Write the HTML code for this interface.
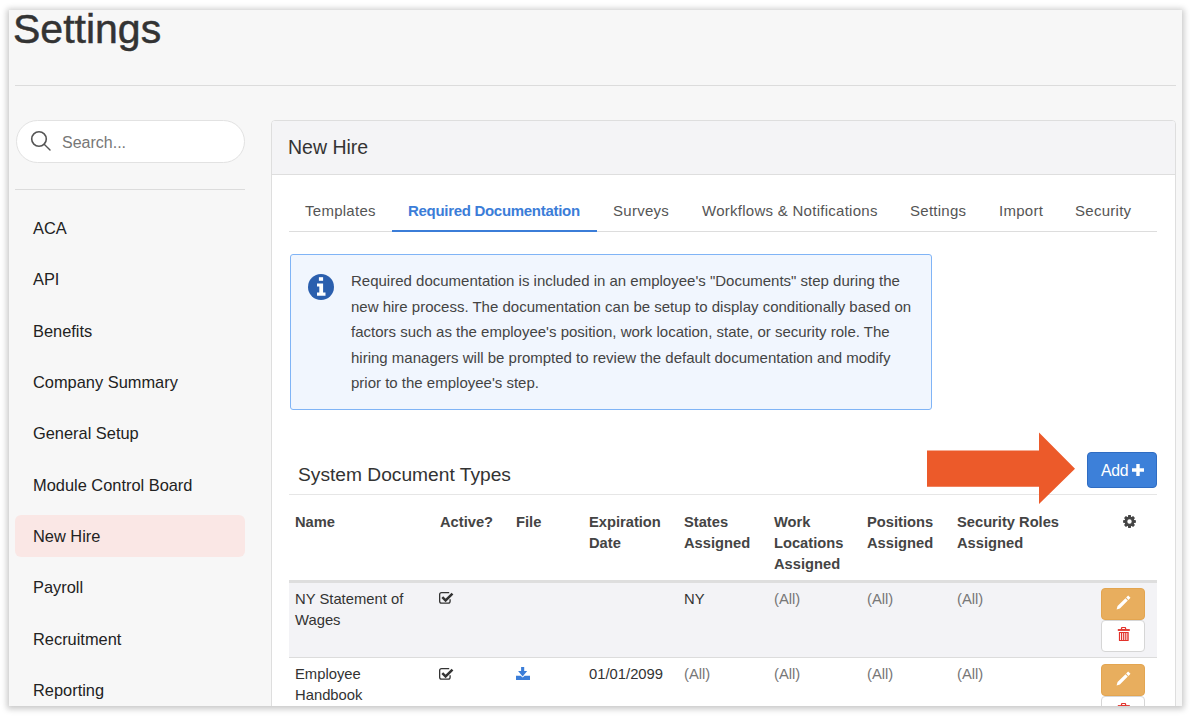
<!DOCTYPE html>
<html><head><meta charset="utf-8">
<style>
*{margin:0;padding:0;box-sizing:border-box}
html,body{width:1190px;height:716px;background:#fff;overflow:hidden;font-family:"Liberation Sans",sans-serif}
.frame{position:absolute;left:9px;top:10px;width:1173px;height:696px;background:#f7f7f7;box-shadow:0 1px 6px 2px rgba(0,0,0,0.22);overflow:hidden}
.a{position:absolute;white-space:nowrap}
.t{position:absolute;white-space:nowrap;line-height:20px}
</style></head><body>
<div class="frame">
  <!-- coordinates inside frame: subtract (9,10) -->
  <div class="t" style="left:4px;top:-4.2px;font-size:41px;line-height:46px;color:#333;-webkit-text-stroke:0.5px #333">Settings</div>
  <div class="a" style="left:6px;top:75px;width:1161px;height:1px;background:#dcdcdc"></div>

  <!-- search -->
  <div class="a" style="left:7px;top:110px;width:229px;height:43px;background:#fff;border:1px solid #e2e2e2;border-radius:22px"></div>
  <svg class="a" style="left:21px;top:120.2px" width="22" height="22" viewBox="0 0 22 22"><circle cx="9" cy="9" r="7.3" fill="none" stroke="#555" stroke-width="1.6"/><line x1="14.2" y1="14.2" x2="20" y2="20" stroke="#555" stroke-width="1.4" stroke-linecap="round"/></svg>
  <div class="t" style="left:53px;top:122.5px;font-size:16px;color:#777">Search...</div>
  <div class="a" style="left:6px;top:179px;width:230px;height:1px;background:#dcdcdc"></div>

  <!-- sidebar -->
  <div class="a" style="left:6px;top:505px;width:230px;height:42px;background:#fae7e5;border-radius:6px"></div>
  <div class="t" style="left:24px;top:208.3px;font-size:16.4px;color:#222">ACA</div>
  <div class="t" style="left:24px;top:259.3px;font-size:16.4px;color:#222">API</div>
  <div class="t" style="left:24px;top:311.3px;font-size:16.4px;color:#222">Benefits</div>
  <div class="t" style="left:24px;top:362.3px;font-size:16.4px;color:#222">Company Summary</div>
  <div class="t" style="left:24px;top:413.3px;font-size:16.4px;color:#222">General Setup</div>
  <div class="t" style="left:24px;top:465.3px;font-size:16.4px;color:#222">Module Control Board</div>
  <div class="t" style="left:24px;top:516.3px;font-size:16.4px;color:#222">New Hire</div>
  <div class="t" style="left:24px;top:567.3px;font-size:16.4px;color:#222">Payroll</div>
  <div class="t" style="left:24px;top:619.3px;font-size:16.4px;color:#222">Recruitment</div>
  <div class="t" style="left:24px;top:670.3px;font-size:16.4px;color:#222">Reporting</div>

  <!-- panel -->
  <div class="a" style="left:262px;top:110px;width:905px;height:700px;background:#fff;border:1px solid #dedede;border-radius:4px;overflow:hidden">
    <div class="a" style="left:0;top:0;width:903px;height:54px;background:#f4f4f6;border-bottom:1px solid #dedede"></div>
  </div>
  <div class="t" style="left:279px;top:126px;font-size:19.5px;line-height:22px;color:#333">New Hire</div>

  <!-- tabs -->
  <div class="a" style="left:280px;top:221px;width:868px;height:1px;background:#dddddd"></div>
  <div class="a" style="left:383px;top:220px;width:205px;height:2px;background:#3b7dd8"></div>
  <div class="t" style="left:296px;top:191px;font-size:15px;color:#555;letter-spacing:0.27px">Templates</div>
  <div class="t" style="left:399px;top:191px;font-size:15px;color:#3b7dd8;font-weight:bold;letter-spacing:-0.3px">Required Documentation</div>
  <div class="t" style="left:604px;top:191px;font-size:15px;color:#555;letter-spacing:0.27px">Surveys</div>
  <div class="t" style="left:693px;top:191px;font-size:15px;color:#555;letter-spacing:0.27px">Workflows &amp; Notifications</div>
  <div class="t" style="left:901px;top:191px;font-size:15px;color:#555;letter-spacing:0.27px">Settings</div>
  <div class="t" style="left:990px;top:191px;font-size:15px;color:#555;letter-spacing:0.27px">Import</div>
  <div class="t" style="left:1066px;top:191px;font-size:15px;color:#555;letter-spacing:0.27px">Security</div>

  <!-- info box -->
  <div class="a" style="left:281px;top:244px;width:642px;height:156px;background:#f1f6fe;border:1px solid #80b4f6;border-radius:3px"></div>
  <svg class="a" style="left:299px;top:264px" width="26" height="26" viewBox="0 0 26 26"><circle cx="13" cy="13" r="13" fill="#2b5fae"/><rect x="10.9" y="3.2" width="4.2" height="3.6" fill="#fff"/><path d="M9 9.4h6.1v9.1h2.4v3.2H9v-3.2h2.3v-5.9H9z" fill="#fff"/></svg>
  <div class="a" style="left:342px;top:258px;font-size:15px;line-height:25.5px;color:#444;white-space:normal;width:570px">Required documentation is included in an employee's "Documents" step during the<br>new hire process. The documentation can be setup to display conditionally based on<br>factors such as the employee's position, work location, state, or security role. The<br>hiring managers will be prompted to review the default documentation and modify<br>prior to the employee's step.</div>

  <!-- section title -->
  <div class="t" style="left:289px;top:454px;font-size:19.2px;line-height:22px;color:#333">System Document Types</div>
  <div class="a" style="left:280px;top:484px;width:868px;height:1px;background:#e6e6e6"></div>

  <!-- arrow -->
  <svg class="a" style="left:0;top:0" width="1173" height="696"><polygon points="918,440.5 1030,440.5 1030,422.6 1066,458.7 1030,494 1030,476.8 918,476.8" fill="#ec5a2a"/></svg>

  <!-- add button -->
  <div class="a" style="left:1078px;top:442px;width:70px;height:36px;background:#3d80d9;border:1px solid #2f6cc2;border-radius:4px"></div>
  <div class="t" style="left:1092px;top:450.5px;font-size:15.8px;letter-spacing:-0.3px;color:#fff">Add</div>
  <svg class="a" style="left:1122.5px;top:454px" width="12" height="12" viewBox="0 0 12 12"><path d="M4.3 0h3.4v4.3H12v3.4H7.7V12H4.3V7.7H0V4.3h4.3z" fill="#fff"/></svg>

  <!-- table header -->
  <div class="a" style="left:286px;top:502px;font-size:14.7px;line-height:21.2px;color:#444;font-weight:bold">Name</div>
  <div class="a" style="left:431px;top:502px;font-size:14.7px;line-height:21.2px;color:#444;font-weight:bold">Active?</div>
  <div class="a" style="left:507px;top:502px;font-size:14.7px;line-height:21.2px;color:#444;font-weight:bold">File</div>
  <div class="a" style="left:580px;top:502px;font-size:14.7px;line-height:21.2px;color:#444;font-weight:bold">Expiration<br>Date</div>
  <div class="a" style="left:675px;top:502px;font-size:14.7px;line-height:21.2px;color:#444;font-weight:bold">States<br>Assigned</div>
  <div class="a" style="left:765px;top:502px;font-size:14.7px;line-height:21.2px;color:#444;font-weight:bold">Work<br>Locations<br>Assigned</div>
  <div class="a" style="left:858px;top:502px;font-size:14.7px;line-height:21.2px;color:#444;font-weight:bold">Positions<br>Assigned</div>
  <div class="a" style="left:948px;top:502px;font-size:14.7px;line-height:21.2px;color:#444;font-weight:bold">Security Roles<br>Assigned</div>
  <svg class="a" style="left:1112.85px;top:503.9px" width="15" height="15" viewBox="0 0 15 15"><path fill-rule="evenodd" fill="#444" d="M5.90 2.90 L6.20 1.10 L8.80 1.10 L9.10 2.90 L9.62 3.12 L11.11 2.06 L12.94 3.89 L11.88 5.38 L12.10 5.90 L13.90 6.20 L13.90 8.80 L12.10 9.10 L11.88 9.62 L12.94 11.11 L11.11 12.94 L9.62 11.88 L9.10 12.10 L8.80 13.90 L6.20 13.90 L5.90 12.10 L5.38 11.88 L3.89 12.94 L2.06 11.11 L3.12 9.62 L2.90 9.10 L1.10 8.80 L1.10 6.20 L2.90 5.90 L3.12 5.38 L2.06 3.89 L3.89 2.06 L5.38 3.12Z M7.5 5.3 A2.2 2.2 0 1 0 7.5 9.7 A2.2 2.2 0 1 0 7.5 5.3Z"/></svg>

  <div class="a" style="left:280px;top:570px;width:868px;height:3px;background:#dedede"></div>
  <div class="a" style="left:280px;top:573px;width:868px;height:75px;background:#f3f3f6;border-bottom:1px solid #dcdcdc"></div>

  <!-- row 1 -->
  <div class="a" style="left:286px;top:578.7px;font-size:14.8px;line-height:21.2px;color:#333">NY Statement of<br>Wages</div>
  <div class="a" style="left:675px;top:578.7px;font-size:14.8px;line-height:21.2px;color:#333">NY</div>
  <div class="a" style="left:765px;top:578.7px;font-size:14.8px;line-height:21.2px;color:#777">(All)</div>
  <div class="a" style="left:858px;top:578.7px;font-size:14.8px;line-height:21.2px;color:#777">(All)</div>
  <div class="a" style="left:948px;top:578.7px;font-size:14.8px;line-height:21.2px;color:#777">(All)</div>

  <!-- row 2 -->
  <div class="a" style="left:286px;top:654px;font-size:14.8px;line-height:21.2px;color:#333">Employee<br>Handbook</div>
  <div class="a" style="left:580px;top:654px;font-size:14.8px;line-height:21.2px;color:#333">01/01/2099</div>
  <div class="a" style="left:675px;top:654px;font-size:14.8px;line-height:21.2px;color:#777">(All)</div>
  <div class="a" style="left:765px;top:654px;font-size:14.8px;line-height:21.2px;color:#777">(All)</div>
  <div class="a" style="left:858px;top:654px;font-size:14.8px;line-height:21.2px;color:#777">(All)</div>
  <div class="a" style="left:948px;top:654px;font-size:14.8px;line-height:21.2px;color:#777">(All)</div>

  <!-- buttons -->
  <div class="a" style="left:1092px;top:578px;width:44px;height:32px;background:#e8ae5e;border:1px solid #e3a550;border-radius:4px"></div>
  <div class="a" style="left:1092px;top:610px;width:44px;height:32px;background:#fff;border:1px solid #d6d6d6;border-radius:4px"></div>
  <div class="a" style="left:1092px;top:654px;width:44px;height:32px;background:#e8ae5e;border:1px solid #e3a550;border-radius:4px"></div>
  <div class="a" style="left:1092px;top:686px;width:44px;height:32px;background:#fff;border:1px solid #d6d6d6;border-radius:4px"></div>

  <!-- check icons -->
  <svg class="a" style="left:429px;top:581px" width="16" height="14" viewBox="0 0 16 14"><path d="M11.2 1.65H3.6Q1.65 1.65 1.65 3.6V10.2Q1.65 12.1 3.6 12.1H10.2Q12.1 12.1 12.1 10.2V8.2" fill="none" stroke="#333" stroke-width="1.3"/><path d="M4.3 6.2L7.6 9.5L14.5 2.7" fill="none" stroke="#333" stroke-width="2.5"/></svg>
  <svg class="a" style="left:429px;top:657px" width="16" height="14" viewBox="0 0 16 14"><path d="M11.2 1.65H3.6Q1.65 1.65 1.65 3.6V10.2Q1.65 12.1 3.6 12.1H10.2Q12.1 12.1 12.1 10.2V8.2" fill="none" stroke="#333" stroke-width="1.3"/><path d="M4.3 6.2L7.6 9.5L14.5 2.7" fill="none" stroke="#333" stroke-width="2.5"/></svg>
  <!-- download -->
  <svg class="a" style="left:506.8px;top:656.9px" width="14" height="13" viewBox="0 0 14 13"><path d="M5.1 0H8.2V4.1H11.2L6.65 9.4L2.1 4.1H5.1Z" fill="#3b7dd8"/><path d="M0 8.7H4.6L6.65 10.6L8.7 8.7H14V12.9H0Z" fill="#3b7dd8"/></svg>
  <!-- pencils -->
  <svg class="a" style="left:1106px;top:585px" width="16" height="16" viewBox="0 0 16 16"><path fill="#fff" d="M1.60 14.40 L2.55 11.11 L10.47 3.19 L12.81 5.53 L4.89 13.45Z M11.11 2.56 L13.16 0.51 L15.49 2.84 L13.44 4.89Z"/></svg>
  <svg class="a" style="left:1106px;top:661px" width="16" height="16" viewBox="0 0 16 16"><path fill="#fff" d="M1.60 14.40 L2.55 11.11 L10.47 3.19 L12.81 5.53 L4.89 13.45Z M11.11 2.56 L13.16 0.51 L15.49 2.84 L13.44 4.89Z"/></svg>
  <!-- trash -->
  <svg class="a" style="left:1108px;top:616px" width="14" height="16" viewBox="0 0 14 16"><path fill-rule="evenodd" fill="#e2322b" d="M3.9 3.8V2.1Q3.9 0.9 5.1 0.9H8Q9.2 0.9 9.2 2.1V3.8ZM5.2 2.1V3.1H7.9V2.1Z"/><rect x="0.8" y="3.1" width="12" height="1.8" fill="#e2322b"/><path fill-rule="evenodd" fill="#e2322b" d="M1.9 6H11.7V14.5Q11.7 15.1 11.1 15.1H2.5Q1.9 15.1 1.9 14.5Z M3.1 7.1H4V13.9H3.1Z M5.2 7.1H6.1V13.9H5.2Z M7.3 7.1H8.2V13.9H7.3Z M9.4 7.1H10.3V13.9H9.4Z"/></svg>
  <svg class="a" style="left:1108px;top:692px" width="14" height="16" viewBox="0 0 14 16"><path fill-rule="evenodd" fill="#e2322b" d="M3.9 3.8V2.1Q3.9 0.9 5.1 0.9H8Q9.2 0.9 9.2 2.1V3.8ZM5.2 2.1V3.1H7.9V2.1Z"/><rect x="0.8" y="3.1" width="12" height="1.8" fill="#e2322b"/><path fill-rule="evenodd" fill="#e2322b" d="M1.9 6H11.7V14.5Q11.7 15.1 11.1 15.1H2.5Q1.9 15.1 1.9 14.5Z M3.1 7.1H4V13.9H3.1Z M5.2 7.1H6.1V13.9H5.2Z M7.3 7.1H8.2V13.9H7.3Z M9.4 7.1H10.3V13.9H9.4Z"/></svg>
</div>
</body></html>
